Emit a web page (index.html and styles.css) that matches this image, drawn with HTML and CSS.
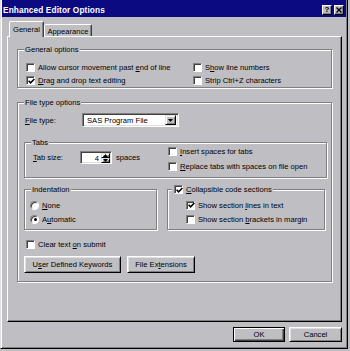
FILE: index.html
```
<!DOCTYPE html>
<html>
<head>
<meta charset="utf-8">
<title>Enhanced Editor Options</title>
<link rel="stylesheet" href="styles.css">
</head>
<body>
<div class="window">
  <div class="titlebar">
    <span class="title">Enhanced Editor Options</span>
    <span class="tb-btns">
      <span class="tb-btn">?</span>
      <span class="tb-btn"><svg width="6" height="6" viewBox="0 0 6 6"><path d="M0.5 0.5 L5.5 5.5 M5.5 0.5 L0.5 5.5" stroke="#000" stroke-width="1.4" fill="none"/></svg></span>
    </span>
  </div>
  <div class="main">
    <div class="tabs">
      <div class="tab active">General</div>
      <div class="tab">Appearance</div>
    </div>
    <div class="panel">
      <fieldset class="group general">
        <legend>General options</legend>
        <div class="general-grid">
          <div class="check"><span class="box"></span><span>Allow cursor movement past <u>e</u>nd of line</span></div>
          <div class="check"><span class="box"></span><span>S<u>h</u>ow line numbers</span></div>
          <div class="check"><span class="box"><svg class="tick" width="7" height="7" viewBox="0 0 7 7"><path d="M0.6 2.8 L2.6 4.8 L6.4 1" stroke="#000" stroke-width="1.6" fill="none"/></svg></span><span><u>D</u>rag and drop text editing</span></div>
          <div class="check"><span class="box"></span><span>Strip Ctrl+Z characters</span></div>
        </div>
      </fieldset>

      <fieldset class="group filetype">
        <legend>File type options</legend>
        <div class="ft-content">
          <div class="ft-row">
            <span class="ft-label"><u>F</u>ile type:</span>
            <div class="select">
              <span class="select-text">SAS Program File</span>
              <span class="drop-btn"><svg width="5" height="3" viewBox="0 0 5 3"><path d="M0 0 H5 L2.5 3 Z" fill="#000"/></svg></span>
            </div>
          </div>

          <fieldset class="group tabs-group">
            <legend>Tabs</legend>
            <div class="tabs-grid">
              <div class="tabsize">
                <span class="ts-label"><u>T</u>ab size:</span>
                <div class="spinner">
                  <span class="spin-val">4</span>
                  <span class="spin-btns">
                    <span class="spin-btn"><svg width="5" height="3" viewBox="0 0 5 3"><path d="M0 3 H5 L2.5 0 Z" fill="#000"/></svg></span>
                    <span class="spin-btn"><svg width="5" height="3" viewBox="0 0 5 3"><path d="M0 0 H5 L2.5 3 Z" fill="#000"/></svg></span>
                  </span>
                </div>
                <span class="ts-unit">spaces</span>
              </div>
              <div class="check row15"><span class="box"></span><span><u>I</u>nsert spaces for tabs</span></div>
              <div class="check row15"><span class="box"></span><span><u>R</u>eplace tabs with spaces on file open</span></div>
            </div>
          </fieldset>

          <div class="pair">
            <fieldset class="group indent">
              <legend>Indentation</legend>
              <div class="opts">
                <div class="radio-row"><span class="radio"></span><span><u>N</u>one</span></div>
                <div class="radio-row"><span class="radio on"></span><span>A<u>u</u>tomatic</span></div>
              </div>
            </fieldset>
            <fieldset class="group collapse">
              <legend><span class="check legend-check"><span class="box"><svg class="tick" width="7" height="7" viewBox="0 0 7 7"><path d="M0.6 2.8 L2.6 4.8 L6.4 1" stroke="#000" stroke-width="1.6" fill="none"/></svg></span><span><u>C</u>ollapsible code sections</span></span></legend>
              <div class="opts collapse-opts">
                <div class="check row14"><span class="box"><svg class="tick" width="7" height="7" viewBox="0 0 7 7"><path d="M0.6 2.8 L2.6 4.8 L6.4 1" stroke="#000" stroke-width="1.6" fill="none"/></svg></span><span>Show section <u>l</u>ines in text</span></div>
                <div class="check row14"><span class="box"></span><span>Show section <u>b</u>rackets in margin</span></div>
              </div>
            </fieldset>
          </div>

          <div class="check clear-row"><span class="box"></span><span>Clear text <u>o</u>n submit</span></div>

          <div class="btn-row">
            <div class="btn kw">U<u>s</u>er Defined Keywords</div>
            <div class="btn ext">File Ex<u>t</u>ensions</div>
          </div>
        </div>
      </fieldset>
    </div>
    <div class="footer">
      <div class="btn default">OK</div>
      <div class="btn cancel">Cancel</div>
    </div>
  </div>
</div>
</body>
</html>
```

FILE: styles.css
```
* { box-sizing: border-box; }
html, body { margin: 0; padding: 0; }
body {
  width: 350px;
  height: 351px;
  overflow: hidden;
  background: #bfbec3;
  font-family: "Liberation Sans", Arial, sans-serif;
  font-size: 7.6px;
  line-height: 9px;
  color: #000;
}
u { text-decoration: underline; text-underline-offset: 1px; text-decoration-thickness: 1px; }

.window {
  width: 348px;
  height: 349px;
  background: #bfbec3;
  border: 1px solid;
  border-top: 0;
  border-color: #dfdfdf #000 #000 #dfdfdf;
  box-shadow: inset 1px 0 #fff, inset -1px -1px #808080;
  padding: 0 1px;
}

.titlebar {
  height: 17px;
  padding: 3px 2px 0 1px;
  background: #0c0a80;
  display: flex;
  align-items: center;
  justify-content: space-between;
}
.title { font-weight: bold; font-size: 8.3px; color: #fff; letter-spacing: 0.1px; }
.tb-btns { display: flex; gap: 2px; }
.tb-btn {
  width: 10px;
  height: 10px;
  background: #bfbec3;
  border: 1px solid;
  border-color: #fff #000 #000 #fff;
  box-shadow: inset -1px -1px #808080;
  display: flex;
  align-items: center;
  justify-content: center;
  font-weight: bold;
  font-size: 8px;
  line-height: 8px;
}

.main { padding: 4px 4px 0 5px; }

.tabs {
  display: flex;
  align-items: flex-end;
  height: 15px;
  margin-left: 2px;
  position: relative;
  z-index: 1;
}
.tab {
  width: 48px;
  height: 12px;
  background: #bfbec3;
  border: 1px solid;
  border-bottom: 0;
  border-color: #fff #404040 transparent #fff;
  box-shadow: inset -1px 0 #808080;
  border-radius: 2px 2px 0 0;
  display: flex;
  align-items: center;
  justify-content: center;
  padding-top: 1px;
}
.tab.active {
  width: 35px;
  height: 16px;
  margin-bottom: -1px;
  padding-top: 0;
}

.panel {
  width: 335px;
  height: 286px;
  border: 1px solid;
  border-color: #fff #000 #000 #fff;
  box-shadow: inset -1px -1px #808080;
  padding: 8px 9px 0 9px;
}

fieldset.group {
  margin: 0;
  padding: 0;
  min-width: 0;
  border: 1px solid #808080;
  box-shadow: inset 1px 1px #fff, 1px 1px #fff;
}
fieldset.group > legend {
  margin-left: 6px;
  padding: 0 1px;
  height: 9px;
  line-height: 9px;
  background: #bfbec3;
}

.check { display: flex; align-items: center; gap: 3px; height: 13px; white-space: nowrap; }
.box {
  flex: none;
  width: 9px;
  height: 9px;
  margin-left: 1px;
  background: #fff;
  border: 1px solid;
  border-color: #808080 #fff #fff #808080;
  box-shadow: inset 1px 1px #404040;
  display: flex;
  align-items: center;
  justify-content: center;
  padding: 1px 0 0 1px;
}
.tick { display: block; flex: none; }

.general-grid {
  display: grid;
  grid-template-columns: 167px 1fr;
  grid-auto-rows: 13px;
  padding: 7px 5px 0 7px;
}

.filetype { margin-top: 10px !important; }
.ft-content { padding: 6px 4px 8px 7px; }
.ft-row { display: flex; align-items: center; height: 14px; }
.ft-label { width: 57px; }
.select {
  width: 97px;
  height: 14px;
  background: #fff;
  border: 1px solid;
  border-color: #808080 #fff #fff #808080;
  box-shadow: inset 1px 1px #404040, inset -1px -1px #dfdfdf;
  display: flex;
  align-items: center;
  padding: 1px 2px 1px 4px;
}
.select-text { flex: 1; }
.drop-btn, .spin-btn {
  background: #bfbec3;
  border: 1px solid;
  border-color: #dfdfdf #000 #000 #dfdfdf;
  box-shadow: inset 1px 1px #fff, inset -1px -1px #808080;
  display: flex;
  align-items: center;
  justify-content: center;
}
.drop-btn { width: 11px; height: 10px; }
.drop-btn svg, .spin-btn svg { display: block; }

.tabs-group { margin: 11px 0 0 -1px !important; }
.tabs-grid {
  display: grid;
  grid-template-columns: 134px 1fr;
  grid-template-rows: 15px 15px;
  margin-top: -3px;
  padding: 0 0 3px 8px;
}
.tabsize {
  grid-row: 1 / span 2;
  display: flex;
  align-items: center;
  padding-bottom: 3px;
}
.ts-label { width: 47px; }
.spinner {
  width: 32px;
  height: 13px;
  background: #fff;
  border: 1px solid;
  border-color: #808080 #fff #fff #808080;
  box-shadow: inset 1px 1px #404040, inset -1px -1px #dfdfdf;
  display: flex;
  align-items: stretch;
  padding: 1px;
}
.spin-val { flex: 1; text-align: right; padding: 1px 2px 0 0; }
.spin-btns { width: 9px; display: flex; flex-direction: column; }
.spin-btn { flex: 1; }
.ts-unit { margin-left: 4px; }
.row15 { height: 15px; }
.row14 { height: 14px; }

.pair { display: flex; gap: 10px; margin: 7px 0 0 -1px; }
.indent { width: 133px; flex: none; }
.collapse { flex: 1; margin-right: 2px !important; }
.opts { padding: 4px 0 3px 5px; }
.collapse-opts { padding-left: 17px; }
.radio-row { display: flex; align-items: center; gap: 3px; height: 14px; }
.radio {
  width: 9px;
  height: 9px;
  border-radius: 50%;
  background: #fff;
  border: 1px solid;
  border-color: #808080 #fff #fff #808080;
  box-shadow: inset 1px 1px #404040;
  display: flex;
  align-items: center;
  justify-content: center;
  flex: none;
}
.radio.on::after {
  content: "";
  width: 3px;
  height: 3px;
  border-radius: 50%;
  background: #000;
  margin: 1px 0 0 1px;
}
fieldset.collapse > legend { margin-left: 4px; }
.legend-check { height: 9px; }

.clear-row { height: 14px; margin-top: 7px; }

.btn {
  height: 17px;
  background: #bfbec3;
  border: 1px solid;
  border-color: #fff #000 #000 #fff;
  box-shadow: inset 1px 1px #dfdfdf, inset -1px -1px #808080;
  display: flex;
  align-items: center;
  justify-content: center;
  white-space: nowrap;
}
.btn-row { display: flex; gap: 6px; margin: 5px 0 0 -1px; }
.kw { width: 97px; }
.ext { width: 68px; }

.footer { display: flex; justify-content: flex-end; gap: 4px; margin-top: 5px; }
.footer .btn { height: 15px; }
.btn.default {
  width: 52px;
  border-color: #000;
  box-shadow: inset 1px 1px #fff, inset -1px -1px #404040, inset -2px -2px #808080;
}
.btn.cancel { width: 53px; }
```
